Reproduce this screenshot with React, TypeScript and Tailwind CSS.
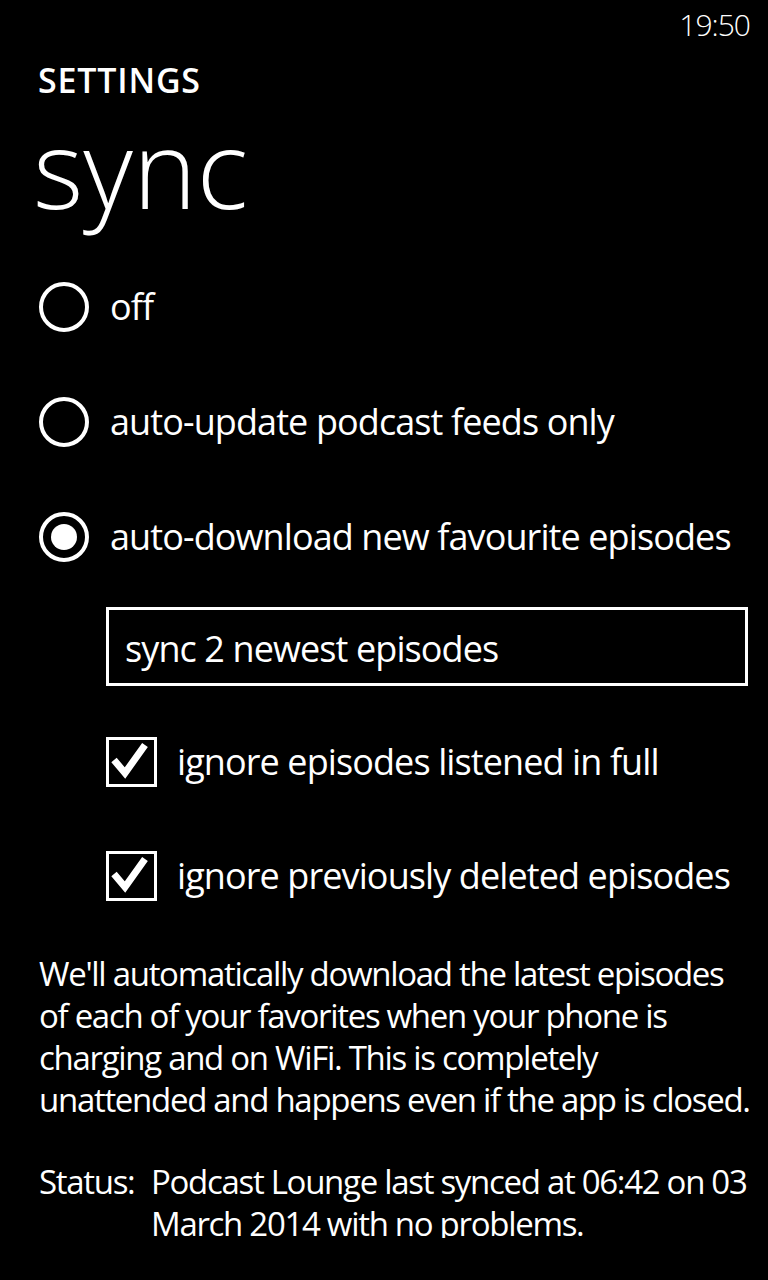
import type { ReactNode } from "react";

const font = { fontFamily: '"Open Sans", "Noto Sans", sans-serif' };

function Radio({ checked, label }: { checked?: boolean; label: string }) {
  return (
    <div className="flex h-[115px] items-center">
      <div className="ml-[39px] flex h-[50px] w-[50px] shrink-0 items-center justify-center rounded-full border-[4px] border-white">
        {checked && <div className="h-[26px] w-[26px] rounded-full bg-white" />}
      </div>
      <span className="ml-[21px] whitespace-nowrap text-[36px] leading-[48px] tracking-[-0.9px]">
        {label}
      </span>
    </div>
  );
}

function Check({ label }: { label: string }) {
  return (
    <div className="flex h-[114px] items-center">
      <div className="ml-[106px] h-[50px] w-[51px] shrink-0 border-[3px] border-white">
        <svg width="45" height="44" viewBox="0 0 45 44" className="block">
          <polyline
            points="5,20 16,33 36,5"
            fill="none"
            stroke="white"
            strokeWidth="7"
            strokeLinejoin="miter"
          />
        </svg>
      </div>
      <span className="ml-[20px] whitespace-nowrap text-[36px] leading-[48px] tracking-[-0.9px]">
        {label}
      </span>
    </div>
  );
}

function Para({ children }: { children: ReactNode }) {
  return <p className="text-[33px] leading-[42px] tracking-[-1.3px]">{children}</p>;
}

export default function App() {
  return (
    <div className="h-[1280px] w-[768px] overflow-hidden bg-black text-white" style={font}>
      <div className="h-[1238px] overflow-hidden">
        {/* status bar */}
        <div className="h-[50px] pr-[18px] text-right text-[30px] font-light leading-[50px] tracking-[-1px]">
          19:50
        </div>

        <div className="h-[60px] pl-[38px] text-[34px] font-semibold leading-[60px] tracking-[0.8px]">
          SETTINGS
        </div>

        <div className="h-[125px] pl-[33px] text-[108px] font-light leading-[116px]">
          sync
        </div>

        <div className="mt-[14px]">
          <Radio label="off" />
          <Radio label="auto-update podcast feeds only" />
          <Radio checked label="auto-download new favourite episodes" />
        </div>

        <div className="ml-[106px] mr-[20px] mt-[13px] flex h-[79px] items-center border-[3px] border-white pl-[16px]">
          <span className="pt-[4px] text-[36px] leading-[48px] tracking-[-0.9px]">sync 2 newest episodes</span>
        </div>

        <div className="mt-[19px]">
          <Check label="ignore episodes listened in full" />
          <Check label="ignore previously deleted episodes" />
        </div>

        <div className="mt-[20px] pl-[39px] whitespace-nowrap">
          <Para>
            We'll automatically download the latest episodes
            <br />
            of each of your favorites when your phone is
            <br />
            charging and on WiFi. This is completely
            <br />
            unattended and happens even if the app is closed.
          </Para>
        </div>

        <div className="mt-[40px] grid grid-cols-[112px_1fr] pl-[39px] pr-[18px]">
          <Para>Status:</Para>
          <Para>
            Podcast Lounge last synced at 06:42 on 03 March 2014 with no problems.
          </Para>
        </div>
      </div>
    </div>
  );
}
